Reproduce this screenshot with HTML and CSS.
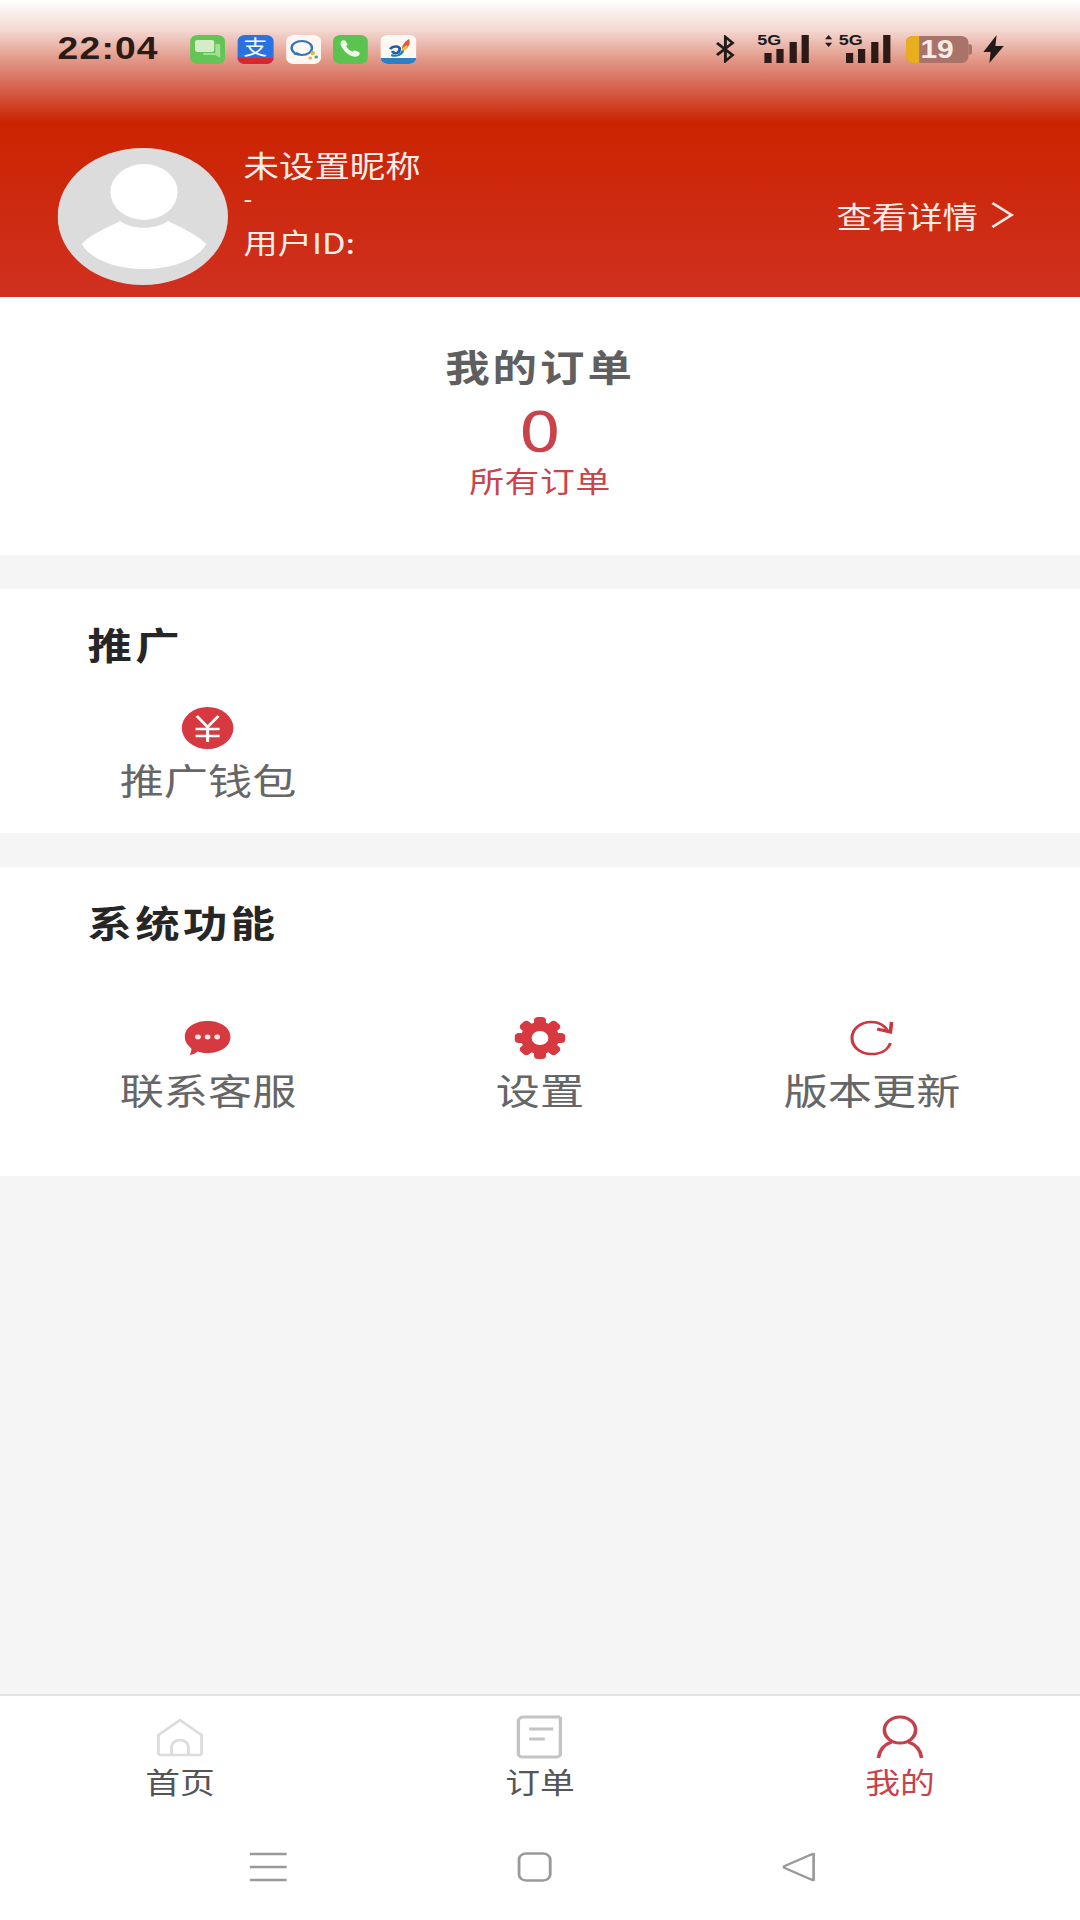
FILE: index.html
```html
<!DOCTYPE html>
<html lang="zh-CN">
<head>
    <meta charset="UTF-8">
    <meta name="viewport" content="width=device-width, initial-scale=1.0">
    <title>我的</title>
    <link rel="stylesheet" href="styles.css">
</head>
<body>
    <div class="app">
        <header class="hero">
            <div class="status-bar">
                <span class="time">22:04</span>
                <div class="app-icons">
                    <svg class="app-icon" viewBox="0 0 29 29"><rect width="29" height="29" rx="6" fill="#62c554"/><path d="M21 9h3a1 1 0 0 1 1 1v13l-4-3H11v-2h10z" fill="#a8dc98"/><rect x="4" y="5" width="16" height="12" rx="2" fill="#d4ecc8"/></svg>
                    <div class="app-icon alipay"><span>支</span><i></i></div>
                    <svg class="app-icon" viewBox="0 0 29 29"><rect width="29" height="29" rx="6" fill="#fdf6f2"/><ellipse cx="13" cy="13" rx="8.500" ry="7" fill="none" stroke="#2f76b8" stroke-width="2"/><path d="M6 20l3-3 3 2z" fill="#2f76b8"/><circle cx="22" cy="18" r="2" fill="#e8b23a"/><circle cx="25" cy="22" r="1.500" fill="#4aa66a"/><circle cx="20" cy="23" r="1.500" fill="#e8b23a"/></svg>
                    <svg class="app-icon" viewBox="0 0 29 29"><rect width="29" height="29" rx="6" fill="#5cc350"/><path d="M7 6c1-1 3-1 3.500 0l1.500 3c.3.7 0 1.300-1 2 .8 2.500 3 4.700 5.500 5.500.7-1 1.300-1.300 2-1l3 1.500c1 .5 1 2.500 0 3.500-2 2-5.500 1.500-9-1.500S4.500 9 7 6z" fill="#eef8e8"/></svg>
                    <svg class="app-icon" viewBox="0 0 30 29"><rect width="30" height="29" rx="6" fill="#fdf8f4"/><path d="M0 23h30v0a6 6 0 0 1-6 6H6a6 6 0 0 1-6-6z" fill="#2f7fc4"/><path d="M8 14c3-4 9-3 8 1s-5 4-6 1" fill="none" stroke="#1f5ea8" stroke-width="2.500"/><path d="M9 20c4 2 9 0 10-5" fill="none" stroke="#1f7fa8" stroke-width="2"/><path d="M18 14c0-5 3-8 6-10 1 4 0 8-4 11z" fill="#e2583a"/><path d="M17 16c1-3 3-5 5-6l1 3c-2 2-4 3-6 3z" fill="#eec23c"/></svg>
                </div>
                <div class="sys-icons">
                    <svg class="ic-bt" viewBox="0 0 17 28"><path d="M2 8l13 12-6 6V2l6 6L2 20" fill="none" stroke="#221a18" stroke-width="2.400"/></svg>
                    <div class="signal">
                        <span class="net">5G</span>
                        <div class="bars"><i class="b1"></i><i class="b2"></i><i class="b3"></i><i class="b4"></i></div>
                    </div>
                    <div class="signal second">
                        <svg class="updown" viewBox="0 0 8 14"><path d="M4 0l3.500 5h-7zM4 14L.5 9h7z" fill="#221a18"/></svg>
                        <span class="net">5G</span>
                        <div class="bars"><i class="b1"></i><i class="b2"></i><i class="b3"></i><i class="b4"></i></div>
                    </div>
                    <div class="battery"><i class="level"></i><span>19</span></div>
                    <svg class="ic-bolt" viewBox="0 0 17 28"><path d="M11 0L0 17h6l-1 11L17 11h-7z" fill="#221a18"/></svg>
                </div>
            </div>

            <div class="profile">
                <svg class="avatar" viewBox="0 0 142 137">
                    <ellipse cx="71" cy="68.500" rx="71" ry="68.500" fill="#dcdcdc"/>
                    <circle cx="72" cy="44" r="28" fill="#fff"/>
                    <path d="M20 96C30 84 45 78 52 73c10 9 30 9 40 0 8 5 21 11 32 23-8 16-29 25-52 25S28 112 20 96z" fill="#fff"/>
                </svg>
                <div class="profile-info">
                    <div class="nickname">未设置昵称</div>
                    <div class="dash">-</div>
                    <div class="user-id">用户ID:</div>
                </div>
                <a class="detail-link">
                    <span>查看详情</span>
                    <svg class="chevron" viewBox="0 0 20 28"><path d="M2 2l16 12L2 26" fill="none" stroke="#fbe9e4" stroke-width="2.400"/></svg>
                </a>
            </div>
        </header>

        <main class="content">
            <section class="card orders">
                <h2 class="orders-title">我的订单</h2>
                <div class="orders-count">0</div>
                <div class="orders-label">所有订单</div>
            </section>

            <section class="card promo">
                <h3 class="card-title">推广</h3>
                <div class="item-grid">
                    <div class="item">
                        <svg class="item-icon" viewBox="0 0 44 42">
                            <ellipse cx="22" cy="21" rx="21.500" ry="21" fill="#d6393f"/>
                            <path d="M13 9l9 11 9-11M12 22h20M12 29h20M22 20v15" fill="none" stroke="#fff" stroke-width="2.600"/>
                        </svg>
                        <span class="item-label">推广钱包</span>
                    </div>
                </div>
            </section>

            <section class="card system">
                <h3 class="card-title">系统功能</h3>
                <div class="item-grid">
                    <div class="item">
                        <svg class="item-icon" viewBox="0 0 40 42">
                            <path d="M20 4c10 0 19 6 19 16S30 36 20 36c-3 0-6-.5-8-1.500-2 1.500-4 3-7 3.500 1-2 1.500-4 1.500-6.500C3 28 1 24.500 1 20 1 10 10 4 20 4z" fill="#d6393f"/>
                            <circle cx="12" cy="20" r="2.400" fill="#fbe9e4"/>
                            <circle cx="20" cy="20" r="2.400" fill="#fbe9e4"/>
                            <circle cx="28" cy="20" r="2.400" fill="#fbe9e4"/>
                        </svg>
                        <span class="item-label">联系客服</span>
                    </div>
                    <div class="item">
                        <svg class="item-icon" viewBox="0 0 44 42">
                            <g fill="#d6393f">
                                <circle cx="22" cy="21" r="16"/>
                                <rect x="17" y="0" width="10" height="42" rx="3.500"/>
                                <rect x="17" y="0" width="10" height="42" rx="3.500" transform="rotate(45 22 21)"/>
                                <rect x="17" y="0" width="10" height="42" rx="3.500" transform="rotate(90 22 21)"/>
                                <rect x="17" y="0" width="10" height="42" rx="3.500" transform="rotate(135 22 21)"/>
                            </g>
                            <circle cx="22" cy="21" r="7" fill="#fff"/>
                        </svg>
                        <span class="item-label">设置</span>
                    </div>
                    <div class="item">
                        <svg class="item-icon" viewBox="0 0 40 42">
                            <path d="M33 14C30 8 25 5 19 5 10 5 3 12 3 21s7 16 16 16c8 0 14-4 16-11" fill="none" stroke="#c9383e" stroke-width="2.600"/>
                            <path d="M24 12l11 3 1-10" fill="none" stroke="#c9383e" stroke-width="3"/>
                        </svg>
                        <span class="item-label">版本更新</span>
                    </div>
                </div>
            </section>
        </main>

        <nav class="tabbar">
            <div class="tab">
                <svg class="tab-icon" viewBox="0 0 40 44"><path d="M2 20L20 5l18 15v18a2 2 0 0 1-2 2H4a2 2 0 0 1-2-2z" fill="none" stroke="#dcdcdc" stroke-width="2.400"/><path d="M13 40v-8a7 7 0 0 1 14 0v8" fill="none" stroke="#dcdcdc" stroke-width="2.400"/></svg>
                <span class="tab-label">首页</span>
            </div>
            <div class="tab">
                <svg class="tab-icon" viewBox="0 0 40 44"><path d="M37 2H6a4 4 0 0 0-4 4v33a3 3 0 0 0 3 3h29a3 3 0 0 0 3-3V2" fill="none" stroke="#c4c4c4" stroke-width="2.800"/><path d="M11 14h20M11 24h13" stroke="#c4c4c4" stroke-width="3"/></svg>
                <span class="tab-label">订单</span>
            </div>
            <div class="tab active">
                <svg class="tab-icon" viewBox="0 0 40 44"><circle cx="20" cy="15" r="13" fill="none" stroke="#c4404a" stroke-width="3"/><path d="M2 43c1-9 6-14 11-16M38 43c-1-9-6-14-11-16" fill="none" stroke="#c4404a" stroke-width="3"/></svg>
                <span class="tab-label">我的</span>
            </div>
        </nav>

        <div class="nav-bar">
            <svg class="nav-menu" viewBox="0 0 31 30"><path d="M0 2h31M0 15h31M0 28h31" stroke="#999" stroke-width="2.400"/></svg>
            <svg class="nav-home" viewBox="0 0 29 30"><rect x="1.500" y="1.500" width="26" height="27" rx="6" fill="none" stroke="#999" stroke-width="2.400"/></svg>
            <svg class="nav-back" viewBox="0 0 28 30"><path d="M26 2v26a1 1 0 0 1-1 0L2 16a1 1 0 0 1 0-2L25 2a1 1 0 0 1 1 0z" fill="none" stroke="#999" stroke-width="2.200"/></svg>
        </div>
    </div>
</body>
</html>
```

FILE: styles.css
```css
:root {
    --red: #d03a40;
    --red-text: #c9444a;
    --page-bg: #f5f5f5;
    --label: #666666;
}

* {
    margin: 0;
    padding: 0;
    box-sizing: border-box;
}

html,
body {
    height: 100%;
    overflow: hidden;
    background: #ffffff;
}

.app {
    width: 900px;
    height: 1920px;
    display: flex;
    flex-direction: column;
    transform: scaleX(1.2);
    transform-origin: 0 0;
    font-family: "Noto Sans CJK SC", "Noto Sans", sans-serif;
    color: var(--label);
}

.hero {
    height: 297px;
    padding-top: 34px;
    background: linear-gradient(#ffffff 0, #f3d8d1 30px, #e29787 60px, #d4553f 95px, #cb2402 122px, #d03020 100%);
}

.status-bar {
    height: 30px;
    display: flex;
    align-items: center;
    padding-left: 48px;
    padding-right: 63px;
}

.time {
    width: 110px;
    font-family: "Liberation Sans", sans-serif;
    font-size: 31px;
    font-weight: 700;
    letter-spacing: 1px;
    color: #2b1a16;
}

.app-icons {
    display: flex;
    gap: 9.800px;
}

.app-icon {
    width: 30px;
    height: 29px;
    display: block;
}

.alipay {
    position: relative;
    border-radius: 6px;
    background: #2a72e0;
    color: #ffffff;
    font-size: 20px;
    line-height: 23px;
    text-align: center;
}

.alipay span {
    display: block;
    height: 23px;
}

.alipay i {
    position: absolute;
    left: 0;
    right: 0;
    bottom: 0;
    height: 6px;
    border-radius: 0 0 6px 6px;
    background: #d8282e;
}

.sys-icons {
    margin-left: auto;
    display: flex;
    align-items: center;
}

.ic-bt,
.ic-bolt {
    width: 18px;
    height: 28px;
}

.signal {
    position: relative;
    width: 43px;
    height: 28px;
    margin-left: 18px;
}

.signal.second {
    margin-left: 25px;
}

.updown {
    position: absolute;
    left: -12px;
    top: 0;
    width: 7px;
    height: 12px;
}

.net {
    position: absolute;
    left: 0;
    top: -3px;
    font-family: "Liberation Sans", sans-serif;
    font-size: 15px;
    font-weight: 700;
    line-height: 16px;
    color: #221a18;
}

.bars {
    position: absolute;
    inset: 0;
    display: flex;
    align-items: flex-end;
    justify-content: flex-end;
    gap: 4.500px;
}

.bars i {
    width: 6px;
    background: #2b1a16;
}

.b1 { height: 10px; }
.b2 { height: 14px; }
.b3 { height: 21px; }
.b4 { height: 28px; }

.battery {
    position: relative;
    width: 52px;
    height: 27px;
    margin-left: 13px;
    margin-right: 2px;
    padding-left: 12px;
    border-radius: 6px;
    background: #a9736a;
    color: #f8ece6;
    font-family: "Liberation Sans", sans-serif;
    font-size: 25px;
    font-weight: 700;
    line-height: 27px;
}

.battery::after {
    content: "";
    position: absolute;
    right: -3px;
    top: 8px;
    width: 3px;
    height: 11px;
    border-radius: 0 3px 3px 0;
    background: #a9736a;
}

.battery .level {
    position: absolute;
    left: 0;
    top: 0;
    bottom: 0;
    width: 11px;
    border-radius: 6px 0 0 6px;
    background: #e9ae1e;
}

.ic-bolt {
    margin-left: 10px;
}

.profile {
    height: 137px;
    margin-top: 84px;
    padding-left: 48px;
    padding-right: 55px;
    display: flex;
    align-items: center;
    color: #fbeee9;
}

.avatar {
    width: 142px;
    height: 137px;
    flex-shrink: 0;
}

.profile-info {
    align-self: flex-start;
    margin-top: -3px;
    margin-left: 13px;
    font-size: 29.500px;
}

.nickname {
    height: 38px;
    line-height: 38px;
}

.dash {
    height: 25px;
    margin-top: 4px;
    font-family: "Liberation Sans", sans-serif;
    font-size: 22px;
    line-height: 25px;
}

.user-id {
    height: 38px;
    line-height: 38px;
    margin-top: 11px;
    font-size: 28.500px;
}

.detail-link {
    margin-left: auto;
    margin-bottom: 4px;
    display: flex;
    align-items: center;
    gap: 10px;
    font-size: 29.500px;
}

.chevron {
    width: 20px;
    height: 28px;
}

.content {
    flex: 1;
    background: var(--page-bg);
}

.card {
    background: #ffffff;
    margin-bottom: 34px;
}

.orders {
    height: 258px;
    padding-top: 46px;
    text-align: center;
}

.orders-title {
    font-size: 37px;
    font-weight: 700;
    line-height: 46px;
    letter-spacing: 2.500px;
    color: #5f5f5f;
}

.orders-count {
    margin-top: 13px;
    font-family: "DejaVu Sans", sans-serif;
    font-size: 56px;
    line-height: 60px;
    color: var(--red-text);
}

.orders-label {
    font-size: 29px;
    line-height: 36px;
    letter-spacing: 0.500px;
    color: var(--red-text);
}

.promo {
    height: 244px;
    padding-top: 32px;
}

.system {
    height: 309px;
    padding-top: 32px;
}

.card-title {
    padding-left: 73px;
    font-size: 37px;
    font-weight: 700;
    line-height: 46px;
    letter-spacing: 2.700px;
    color: #262626;
}

.item-grid {
    display: grid;
    grid-template-columns: repeat(3, 1fr);
    padding: 0 35px;
}

.promo .item-grid {
    margin-top: 40px;
}

.system .item-grid {
    margin-top: 72px;
}

.item {
    display: flex;
    flex-direction: column;
    align-items: center;
    gap: 8px;
}

.item-icon {
    width: 44px;
    height: 42px;
}

.item-label {
    font-size: 36.800px;
    line-height: 44px;
    color: var(--label);
}

.tabbar {
    height: 116px;
    padding-top: 19px;
    display: grid;
    grid-template-columns: repeat(3, 1fr);
    border-top: 2px solid #e2e2e2;
    background: #ffffff;
}

.tab {
    display: flex;
    flex-direction: column;
    align-items: center;
    gap: 4px;
}

.tab-icon {
    width: 40px;
    height: 44px;
}

.tab-label {
    font-size: 29px;
    line-height: 36px;
    color: #555555;
}

.tab.active .tab-label {
    color: var(--red-text);
}

.nav-bar {
    height: 110px;
    padding-top: 4px;
    padding-left: 208px;
    display: flex;
    align-items: center;
    gap: 192px;
    background: #ffffff;
}

.nav-menu {
    width: 31px;
    height: 30px;
}

.nav-home {
    width: 29px;
    height: 30px;
}

.nav-back {
    width: 28px;
    height: 30px;
}
```
